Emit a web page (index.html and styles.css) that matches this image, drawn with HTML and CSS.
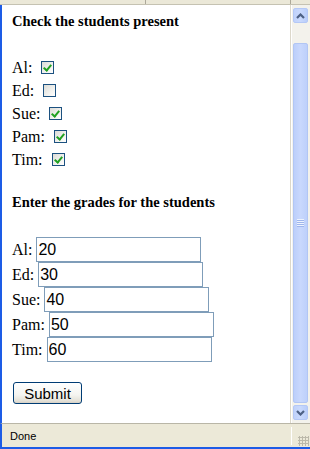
FILE: index.html
```html
<!DOCTYPE html>
<html lang="en">
  <head>
    <meta charset="UTF-8" />
    <title>Attendance and Grades</title>
    <link rel="stylesheet" href="styles.css">
  </head>
  <body>
    <div class="window">
      <div class="toolbar-edge">
        <span class="toolbar-sep sep-1"></span>
        <span class="toolbar-sep sep-2"></span>
      </div>

      <div class="frame">
        <form class="page" action="#">
          <h4 class="title">Check the students present</h4>

          <div class="check-row">Al: <input type="checkbox" class="check" checked /></div>
          <div class="check-row">Ed: <input type="checkbox" class="check" /></div>
          <div class="check-row">Sue: <input type="checkbox" class="check" checked /></div>
          <div class="check-row">Pam: <input type="checkbox" class="check" checked /></div>
          <div class="check-row">Tim: <input type="checkbox" class="check" checked /></div>

          <h4 class="title second">Enter the grades for the students</h4>

          <div class="grade-row">Al:&nbsp;<input type="text" class="grade" value="20" /></div>
          <div class="grade-row">Ed:&nbsp;<input type="text" class="grade" value="30" /></div>
          <div class="grade-row">Sue:&nbsp;<input type="text" class="grade" value="40" /></div>
          <div class="grade-row">Pam:&nbsp;<input type="text" class="grade" value="50" /></div>
          <div class="grade-row">Tim:&nbsp;<input type="text" class="grade" value="60" /></div>

          <button type="submit" class="btn">Submit</button>
        </form>

        <div class="scrollbar">
          <div class="sb-btn">
            <svg width="9" height="6" viewBox="0 0 9 6">
              <path d="M1 5 L4.5 1.5 L8 5" fill="none" stroke="#4d6185" stroke-width="2.2" />
            </svg>
          </div>
          <div class="sb-track">
            <div class="sb-thumb">
              <div class="sb-grip"></div>
            </div>
          </div>
          <div class="sb-btn">
            <svg width="9" height="6" viewBox="0 0 9 6">
              <path d="M1 1 L4.5 4.5 L8 1" fill="none" stroke="#4d6185" stroke-width="2.2" />
            </svg>
          </div>
        </div>
      </div>

      <div class="statusbar">
        <span class="status-text">Done</span>
        <span class="status-pane"></span>
        <span class="size-grip"></span>
      </div>
    </div>
  </body>
</html>
```

FILE: styles.css
```css
* {
  box-sizing: border-box;
}

body {
  margin: 0;
  background: #ffffff;
}

.window {
  width: 310px;
  height: 449px;
  display: flex;
  flex-direction: column;
  overflow: hidden;
  border-bottom: 2px solid #1d5ce6;
}

/* bottom edge of the IE toolbar */
.toolbar-edge {
  position: relative;
  height: 5px;
  background: #ebe8d8;
  border-bottom: 1px solid #c5c2b2;
}

.toolbar-sep {
  position: absolute;
  top: 0;
  width: 1px;
  height: 4px;
  background: #aca899;
}

.sep-1 {
  left: 145px;
}

.sep-2 {
  left: 290px;
}

.frame {
  height: 418px;
  display: flex;
  border-left: 2px solid #1d5ce6;
}

.page {
  flex: 1;
  margin: 0;
  padding: 9px 0 0 10px;
  background: #ffffff;
  border-right: 1px solid #dcd8cb;
  font-family: "Liberation Serif", "Times New Roman", serif;
  font-size: 16px;
  color: #000000;
}

.title {
  margin: 0 0 27px 0;
  font-size: 14.5px;
  font-weight: bold;
  line-height: 15px;
}

.title.second {
  margin-top: 24px;
}

.check-row {
  height: 23px;
  line-height: 23px;
  white-space: nowrap;
}

.check {
  appearance: none;
  -webkit-appearance: none;
  width: 13px;
  height: 13px;
  margin: 0 0 0 5px;
  vertical-align: -1px;
  border: 1px solid #1c5180;
  background: linear-gradient(135deg, #dcdcd7 0%, #f2f2ef 60%, #ffffff 100%);
  position: relative;
}

.check:checked::after {
  content: "";
  position: absolute;
  left: 3px;
  top: 1px;
  width: 3px;
  height: 6px;
  border: solid #21a121;
  border-width: 0 2px 2px 0;
  transform: rotate(40deg);
}

.grade-row {
  height: 25px;
  display: flex;
  align-items: center;
  line-height: 25px;
  white-space: nowrap;
}

.grade {
  width: 165px;
  height: 25px;
  margin: 0;
  padding: 0 1px;
  border: 1px solid #7f9db9;
  font-family: "Liberation Sans", Arial, sans-serif;
  font-size: 16px;
  color: #000000;
  outline: none;
}

.btn {
  display: block;
  width: 69px;
  height: 22px;
  margin: 20px 0 0 1px;
  padding: 0;
  border: 1px solid #003c74;
  border-radius: 3px;
  background: linear-gradient(#ffffff 0%, #f4f4f0 60%, #e3e0d6 90%, #d6d0c5 100%);
  font-family: "Liberation Sans", Arial, sans-serif;
  font-size: 15px;
  color: #000000;
}

/* XP style scrollbar */
.scrollbar {
  width: 19px;
  display: flex;
  flex-direction: column;
  padding: 3px 2px 3px 1px;
  background: #f3f2ec;
  border-left: 1px solid #ffffff;
}

.sb-btn {
  height: 15px;
  display: flex;
  align-items: center;
  justify-content: center;
  border: 1px solid #b4c8f6;
  border-radius: 2px;
  background: linear-gradient(90deg, #c0d2fb, #c9d9fd 50%, #b9cdfa);
}

.sb-track {
  flex: 1;
  display: flex;
  flex-direction: column;
  padding: 20px 0 2px 0;
}

.sb-thumb {
  flex: 1;
  display: flex;
  align-items: center;
  justify-content: center;
  border: 1px solid #b2c6f4;
  border-radius: 2px;
  background: linear-gradient(90deg, #bccffb, #c9d8fd 50%, #bed0fb);
}

.sb-grip {
  width: 7px;
  height: 8px;
  background: repeating-linear-gradient(#eef3fe 0, #eef3fe 1px, #9fb6ec 1px, #9fb6ec 2px);
}

.statusbar {
  position: relative;
  height: 24px;
  display: flex;
  align-items: center;
  border-left: 2px solid #1d5ce6;
  border-top: 1px solid #b9b6a7;
  background: #ece9d8;
}

.status-text {
  padding-left: 8px;
  font-family: "Liberation Sans", Tahoma, sans-serif;
  font-size: 11px;
  color: #000000;
}

.status-pane {
  position: absolute;
  left: 289px;
  top: 3px;
  width: 1px;
  height: 18px;
  background: #c9c6b7;
  border-right: 1px solid #ffffff;
}

.size-grip {
  position: absolute;
  right: 1px;
  bottom: 1px;
  width: 11px;
  height: 10px;
  background: radial-gradient(circle, #bcb9aa 0 1px, transparent 1.2px) 0 0 / 3px 3px;
}
```
